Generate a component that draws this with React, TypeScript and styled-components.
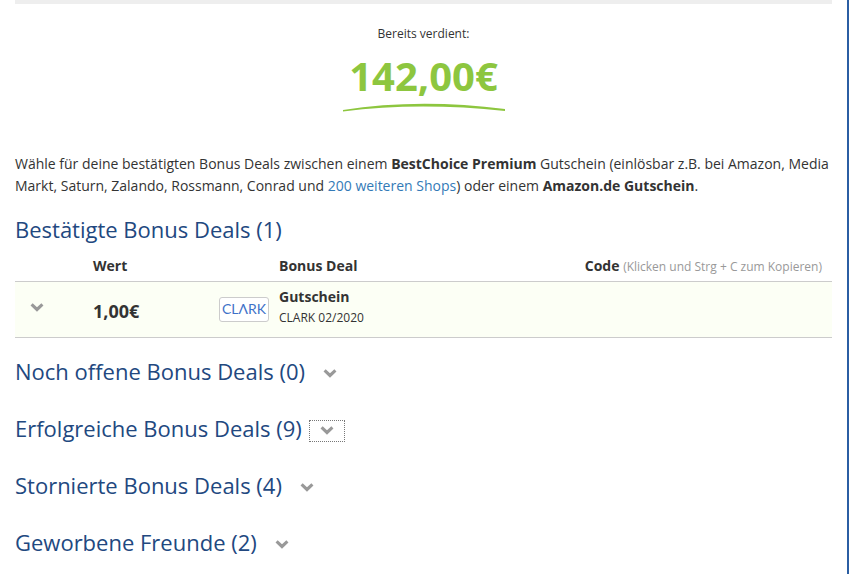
import React, { useState } from "react";
import styled, { createGlobalStyle } from "styled-components";

const GlobalStyle = createGlobalStyle`
  * { box-sizing: border-box; }
  body {
    margin: 0;
    background: #fff;
    color: #333;
    font-family: "Open Sans", "Noto Sans", sans-serif;
    font-size: 14px;
    line-height: 22px;
  }
`;

const Page = styled.main`
  min-height: 100vh;
  padding: 0 15px;
  border-right: 2px solid #2b5ea3;
  overflow: hidden;
`;

const Divider = styled.div`
  height: 4px;
  background: #eee;
`;

const Earned = styled.section`
  display: flex;
  flex-direction: column;
  align-items: center;
  padding-top: 20px;
`;

const EarnedLabel = styled.div`
  font-size: 12px;
  line-height: 20px;
`;

const EarnedAmount = styled.div`
  margin-top: 5px;
  color: #8dc63f;
  font-size: 40px;
  font-weight: 700;
  line-height: 54px;
`;

const Swoosh = styled.svg`
  display: block;
  width: 164px;
  height: 9px;
`;

const Intro = styled.p`
  margin: 41px 0 0;
`;

const ShopLink = styled.a`
  color: #337ab7;
  text-decoration: none;
`;

const SectionTitle = styled.h2`
  margin: 0;
  color: #22487f;
  font-size: 22px;
  font-weight: 400;
  line-height: 30px;
`;

const Confirmed = styled.section`
  padding-top: 17px;
`;

const DealTable = styled.table`
  width: 100%;
  margin-top: 6px;
  border-collapse: collapse;
  table-layout: fixed;
`;

const Column = styled.col<{ $width?: number }>`
  width: ${({ $width }) => ($width ? `${$width}px` : "auto")};
`;

const HeadCell = styled.th<{ $align?: "right" }>`
  height: 31px;
  padding: 2px 10px 0 0;
  border-bottom: 1px solid #ccc;
  font-weight: 700;
  text-align: ${({ $align }) => $align ?? "left"};
`;

const Hint = styled.span`
  color: #999;
  font-size: 12px;
  font-weight: 400;
`;

const DealRow = styled.tr`
  background: #fcfff5;
`;

const Cell = styled.td`
  height: 56px;
  padding: 0;
  border-bottom: 1px solid #ccc;
  vertical-align: middle;
`;

const Value = styled.strong`
  display: block;
  padding-top: 3px;
  font-size: 18px;
`;

const Logo = styled.div`
  display: flex;
  align-items: center;
  justify-content: center;
  width: 50px;
  height: 25px;
  border: 1px solid #ccc;
  border-radius: 3px;
  background: #fff;
  color: #3f72c8;
  font-family: Lato, sans-serif;
  font-size: 14px;
`;

const DealName = styled.strong`
  display: block;
  line-height: 20px;
`;

const DealDetail = styled.div`
  padding-bottom: 4px;
  font-size: 12px;
  line-height: 21px;
`;

const Toggle = styled.button`
  display: flex;
  align-items: center;
  justify-content: center;
  width: 36px;
  height: 22px;
  padding: 0;
  border: 0;
  background: none;
  color: #999;
  cursor: pointer;
`;

const RowToggle = styled(Toggle)`
  width: 43px;
  padding-bottom: 3px;
`;

const SectionToggle = styled(Toggle)<{ $marked: boolean }>`
  margin-top: 6px;
  border: ${({ $marked }) => ($marked ? "1px dotted #777" : "1px solid transparent")};
  outline: none;
`;

const Sections = styled.div`
  display: flex;
  flex-direction: column;
  gap: 27px;
  padding: 18px 0 16px;
`;

const SectionRow = styled.section`
  display: flex;
  align-items: center;
  gap: 7px;
`;

const Chevron = () => (
  <svg width="14" height="9" viewBox="0 0 14 9" aria-hidden="true">
    <path d="M1.6 1.4 L7 6.5 L12.4 1.4" fill="none" stroke="currentColor" strokeWidth="3.1" />
  </svg>
);

const sections = [
  { title: "Noch offene Bonus Deals", count: 0 },
  { title: "Erfolgreiche Bonus Deals", count: 9 },
  { title: "Stornierte Bonus Deals", count: 4 },
  { title: "Geworbene Freunde", count: 2 },
];

export default function App() {
  const [marked, setMarked] = useState(1);

  return (
    <>
      <GlobalStyle />
      <Page>
        <Divider />
        <Earned>
          <EarnedLabel>Bereits verdient:</EarnedLabel>
          <EarnedAmount>142,00€</EarnedAmount>
          <Swoosh viewBox="0 0 164 9" aria-hidden="true">
            <path d="M1 7 Q76 -5 163 6 L163 8 Q76 -1 1 8.5 Z" fill="#8dc63f" />
          </Swoosh>
        </Earned>
        <Intro>
          Wähle für deine bestätigten Bonus Deals zwischen einem <b>BestChoice Premium</b> Gutschein
          (einlösbar z.B. bei Amazon, Media Markt, Saturn, Zalando, Rossmann, Conrad und{" "}
          <ShopLink href="#shops">200 weiteren Shops</ShopLink>) oder einem <b>Amazon.de Gutschein</b>.
        </Intro>
        <Confirmed>
          <SectionTitle>Bestätigte Bonus Deals (1)</SectionTitle>
          <DealTable>
            <colgroup>
              <Column $width={78} />
              <Column $width={126} />
              <Column $width={60} />
              <Column />
              <Column $width={300} />
            </colgroup>
            <thead>
              <tr>
                <HeadCell />
                <HeadCell scope="col">Wert</HeadCell>
                <HeadCell />
                <HeadCell scope="col">Bonus Deal</HeadCell>
                <HeadCell scope="col" $align="right">
                  Code <Hint>(Klicken und Strg + C zum Kopieren)</Hint>
                </HeadCell>
              </tr>
            </thead>
            <tbody>
              <DealRow>
                <Cell>
                  <RowToggle type="button" aria-label="Gutschein aufklappen">
                    <Chevron />
                  </RowToggle>
                </Cell>
                <Cell>
                  <Value>1,00€</Value>
                </Cell>
                <Cell>
                  <Logo role="img" aria-label="CLARK">
                    CLΛRK
                  </Logo>
                </Cell>
                <Cell>
                  <DealName>Gutschein</DealName>
                  <DealDetail>CLARK 02/2020</DealDetail>
                </Cell>
                <Cell />
              </DealRow>
            </tbody>
          </DealTable>
        </Confirmed>
        <Sections>
          {sections.map(({ title, count }, index) => (
            <SectionRow key={title}>
              <SectionTitle>
                {title} ({count})
              </SectionTitle>
              <SectionToggle
                type="button"
                $marked={marked === index}
                aria-label={`${title} aufklappen`}
                onClick={() => setMarked(index)}
              >
                <Chevron />
              </SectionToggle>
            </SectionRow>
          ))}
        </Sections>
      </Page>
    </>
  );
}
